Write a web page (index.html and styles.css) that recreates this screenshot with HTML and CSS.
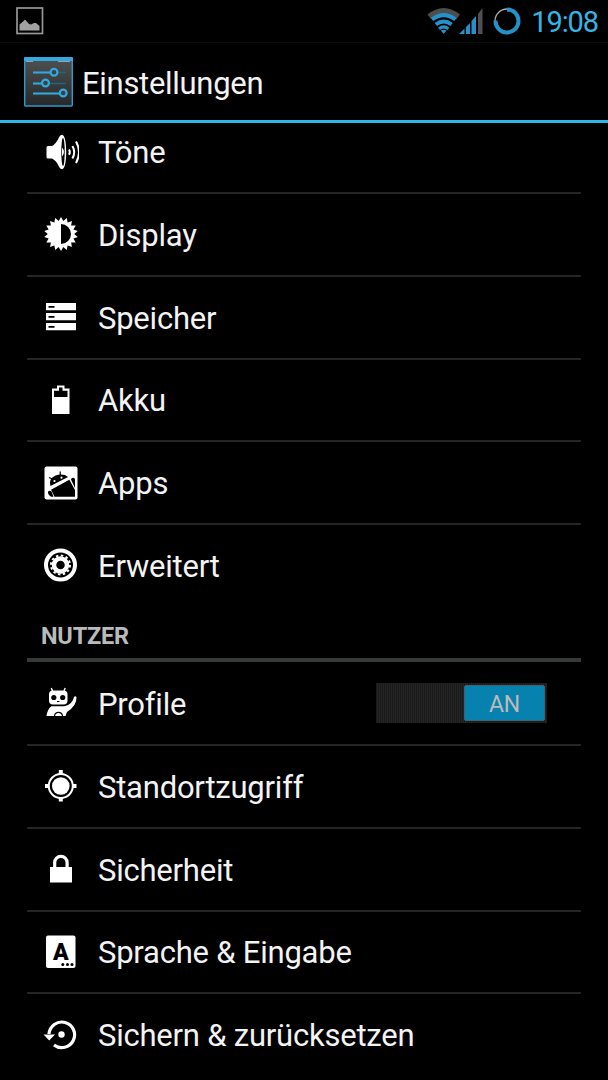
FILE: index.html
```html
<!DOCTYPE html>
<html lang="de">
<head>
  <meta charset="UTF-8">
  <title>Einstellungen</title>
  <link rel="stylesheet" href="styles.css">
</head>
<body>

  <div class="statusbar">
    <svg class="notification" width="28" height="28" viewBox="0 0 28 28">
      <rect x="1" y="1" width="25.5" height="25.5" fill="none" stroke="#969696" stroke-width="1.7"/>
      <path d="M3.500 23.500v-6l3-2.500 2.500-2.500 4 4.500 2 .5 3-1.500h2l3.500 3v4.500z" fill="#a2a2a2"/>
    </svg>
    <div class="status-icons">
      <!-- WLAN -->
      <svg width="34" height="28" viewBox="0 0 34 28">
        <path d="M.5 7.5Q16.700-5.500 33 7.500L29.500 12Q16.700 2 4 12z" fill="#4d4d4d"/>
        <g fill="none" stroke="#2492c8" stroke-width="4">
          <path d="M5 12.5Q16.700 3.800 28.500 12.500"/>
          <path d="M8.800 17.5Q16.700 11.500 24.600 17.500" stroke-width="3.8"/>
          <path d="M12 21.8Q16.700 18 21.400 21.800" stroke-width="3"/>
        </g>
        <path d="M13.800 23.5Q16.700 21.800 19.600 23.500L16.700 27z" fill="#2492c8"/>
      </svg>
      <!-- Signal -->
      <svg class="signal" width="25" height="28" viewBox="0 0 25 28">
        <path d="M0 27L5.500 21.500V27zM7 20L11 16V27H7zM12.500 14L17 9V27H12.500z" fill="#2492c8"/>
        <path d="M19 7L23.500 1V27H19z" fill="#505050"/>
      </svg>
      <!-- Akku-Kreis -->
      <svg class="circle" width="28" height="28" viewBox="0 0 28 28">
        <circle cx="14" cy="14" r="12" fill="none" stroke="#aaa" stroke-width="1.3"/>
        <path d="M14 2.5A11.500 11.500 0 1 1 2.500 13.500" fill="none" stroke="#2492c8" stroke-width="4"/>
      </svg>
      <span class="clock">19:08</span>
    </div>
  </div>

  <div class="header">
    <svg width="50" height="50" viewBox="0 0 50 50">
      <defs>
        <linearGradient id="panel" x1="0" y1="0" x2="0" y2="1">
          <stop offset="0" stop-color="#505252"/>
          <stop offset="1" stop-color="#262829"/>
        </linearGradient>
      </defs>
      <rect x=".7" y="1" width="47.6" height="48" rx="1" fill="url(#panel)" stroke="#3199c8" stroke-width="1.4"/>
      <rect x="0" y="0" width="49" height="4" rx="1" fill="#33a9df"/>
      <path d="M2 4.500h7M34 4.500h12" stroke="#9aa3a7"/>
      <path d="M9 15.500H42M9 26.500H42M9 36.500H42" stroke="#1d6687" stroke-width="1.3"/>
      <path d="M9 15.500H27M9 26.500H18M9 36.500H36" stroke="#31a9df" stroke-width="2"/>
      <g fill="#3b4143" stroke="#31a9df" stroke-width="2.2">
        <circle cx="30" cy="15.2" r="3.4"/>
        <circle cx="21.500" cy="26" r="3.4"/>
        <circle cx="39.200" cy="36" r="3.4"/>
      </g>
    </svg>
    <h1>Einstellungen</h1>
  </div>

  <div class="list">
    <div class="row">
      <svg class="icon" viewBox="0 0 36 36">
        <path d="M3.500 13.500Q3.500 12 5 12H9Q13 10 16.500 2.500Q17.500 .8 19 .8C22 1 23.200 9 23.200 18S22 35 19 35.200Q17.500 35.200 16.500 33.500Q13 26 9 24.500H5Q3.500 24.500 3.500 23z" fill="#fff"/>
        <ellipse cx="20" cy="18" rx="1.7" ry="14"/>
        <path d="M19 13.500Q23 18 19 22.500z" fill="#fff"/>
        <g fill="none" stroke="#fff" stroke-width="2">
          <path d="M26 15.5Q27.700 18 26 20.700"/>
          <path d="M29.400 12Q33 18 29.400 24.500"/>
          <path d="M33 7.500Q39 18 33 29"/>
        </g>
      </svg>
      <span>Töne</span>
    </div>
    <div class="row">
      <svg class="icon" viewBox="0 0 36 36">
        <g fill="#fff">
          <path d="M18 1L32.700 26.500H3.300z"/>
          <path d="M18 1L32.700 26.500H3.300z" transform="rotate(20 18 18)"/>
          <path d="M18 1L32.700 26.500H3.300z" transform="rotate(40 18 18)"/>
          <path d="M18 1L32.700 26.500H3.300z" transform="rotate(60 18 18)"/>
          <path d="M18 1L32.700 26.500H3.300z" transform="rotate(80 18 18)"/>
          <path d="M18 1L32.700 26.500H3.300z" transform="rotate(100 18 18)"/>
        </g>
        <path d="M18 8A10 10 0 0 1 18 28z"/>
      </svg>
      <span>Display</span>
    </div>
    <div class="row">
      <svg class="icon" viewBox="0 0 36 36">
        <path d="M3 4h30v7.300H3zM3 14h30v7.300H3zM3 24h30v7.300H3z" fill="#fff"/>
        <path d="M5.500 7h6v1.800h-6zM5.500 17h6v1.800h-6zM5.500 27h6v1.800h-6z"/>
      </svg>
      <span>Speicher</span>
    </div>
    <div class="row">
      <svg class="icon" viewBox="0 0 36 36">
        <path d="M9 6.500h5V3.500h7.500v3H26.500V32H9z" fill="#fff"/>
        <path d="M11 8.800h5V5.500h3.500v3.300h5V15H11z"/>
      </svg>
      <span>Akku</span>
    </div>
    <div class="row">
      <svg class="icon" viewBox="0 0 36 36">
        <rect x="1.500" y="1.500" width="33" height="33" rx="2" fill="#fff"/>
        <path d="M7.500 21Q5.500 13.500 12.500 10.500Q20.500 8 25 12z"/>
        <path d="M9.500 14L6 12.500M17.200 11V6.500" stroke="#000" stroke-width="1.2"/>
        <path d="M8 24.700L26.300 14.700L32 25V31.800H11.500z"/>
        <path d="M28 14.500Q28.500 12 31 13Q32 13.500 32 15V23z"/>
        <path d="M5 26.500Q7.500 25 8.700 27L10.500 31.800H8Q4.500 29.500 5 26.500z"/>
        <circle cx="11.500" cy="16" r="1.1" fill="#fff"/>
        <circle cx="18.500" cy="12.700" r="1.1" fill="#fff"/>
      </svg>
      <span>Apps</span>
    </div>
    <div class="row last">
      <svg class="icon" viewBox="0 0 36 36">
        <circle cx="17.500" cy="18" r="14.5" fill="none" stroke="#fff" stroke-width="4"/>
        <circle cx="17.500" cy="18" r="6.500" fill="none" stroke="#fff" stroke-width="4.5"/>
        <circle cx="17.500" cy="18" r="9.500" fill="none" stroke="#fff" stroke-width="2" stroke-dasharray="2.500 2.474"/>
      </svg>
      <span>Erweitert</span>
    </div>

    <div class="category">NUTZER</div>

    <div class="row profile">
      <svg class="icon" viewBox="0 0 36 36">
        <path d="M9.500 6L8.300 3M21 6L22.200 3" stroke="#fff" stroke-width="1.4"/>
        <rect x="6" y="5.500" width="18.500" height="14" rx="4" fill="#fff"/>
        <path d="M3.500 31Q4.500 24 8.500 21.300H21.500Q29.500 19.500 31 12Q32 10.500 33.500 12Q34 20.500 24 27L22.500 31z" fill="#fff"/>
        <circle cx="10.800" cy="12.500" r="2.6"/>
        <circle cx="19.700" cy="12.500" r="2.6"/>
        <path d="M14 16.500h2.500" stroke="#000"/>
        <path d="M11.500 31Q12 27.300 15.500 27.300T19.500 31" fill="none" stroke="#000" stroke-width="1.2"/>
      </svg>
      <span>Profile</span>
      <div class="switch"><div class="thumb">AN</div></div>
    </div>
    <div class="row">
      <svg class="icon" viewBox="0 0 36 36">
        <path d="M15.800 2h4v5h-4zM15.800 29h4v4.500h-4zM2 16h5v4H2zM29 16h4.500v4H29z" fill="#fff"/>
        <circle cx="17.800" cy="18" r="12" stroke="#fff" stroke-width="2"/>
        <circle cx="17.800" cy="18" r="8.800" fill="#fff"/>
      </svg>
      <span>Standortzugriff</span>
    </div>
    <div class="row">
      <svg class="icon" viewBox="0 0 36 36">
        <rect x="7" y="16" width="22" height="15.500" fill="#fff"/>
        <path d="M11.700 16.500V11.500A6.200 6.200 0 0 1 24.100 11.500V16.500" fill="none" stroke="#fff" stroke-width="3.2"/>
      </svg>
      <span>Sicherheit</span>
    </div>
    <div class="row">
      <svg class="icon" viewBox="0 0 36 36">
        <rect x="3" y="1.500" width="29.500" height="32.500" rx="2" fill="#fff"/>
        <text class="letter" x="17.800" y="25.500" text-anchor="middle">A</text>
        <circle cx="19.800" cy="30.500" r="1.5"/>
        <circle cx="24.500" cy="30.500" r="1.5"/>
        <circle cx="29" cy="30.500" r="1.5"/>
      </svg>
      <span>Sprache &amp; Eingabe</span>
    </div>
    <div class="row last">
      <svg class="icon" viewBox="0 0 36 36">
        <path d="M6 17A12.800 12.800 0 1 1 11 28" fill="none" stroke="#fff" stroke-width="3.2"/>
        <path d="M.5 17.500H12L6.200 23.500z" fill="#fff"/>
        <circle cx="18.500" cy="17.500" r="3.2" fill="#fff"/>
      </svg>
      <span>Sichern &amp; zurücksetzen</span>
    </div>
  </div>

</body>
</html>
```
FILE: styles.css
```css
* {
  box-sizing: border-box;
}

body {
  margin: 0;
  height: 1080px;
  overflow: hidden;
  background: #000;
  color: #f3f3f3;
  font-family: Roboto, "Liberation Sans", sans-serif;
  font-size: 31px;
  letter-spacing: -0.22px;
}

svg {
  display: block;
  flex: none;
}

.statusbar {
  height: 43px;
  display: flex;
  justify-content: space-between;
  padding: 7px 10px 0 17px;
  border-bottom: 1px solid #0a0a0a;
}

.notification {
  margin-left: -1px;
}

.status-icons {
  display: flex;
}

.signal {
  margin-left: -2px;
}

.circle {
  margin-left: 9px;
}

.clock {
  margin-left: 10px;
  color: #33b5e5;
  font-size: 29px;
  line-height: 30px;
  letter-spacing: -1.1px;
}

.header {
  height: 80px;
  display: flex;
  align-items: center;
  padding-left: 24px;
  border-bottom: 3px solid #33b5e5;
}

.header h1 {
  margin: 3px 0 0 8px;
  font-size: 31px;
  font-weight: normal;
  letter-spacing: -0.3px;
}

.list {
  margin: 0 27px;
  height: 957px;
  overflow: hidden;
}

.row {
  height: 82.75px;
  display: flex;
  align-items: center;
  padding-left: 16px;
  border-bottom: 2px solid #242424;
}

.row:first-child {
  margin-top: -11.75px;
}

.row.last {
  border-bottom-color: transparent;
}

.row.profile {
  height: 84px;
}

.row span {
  margin: 2px 0 0 19px;
}

.icon {
  width: 36px;
  height: 36px;
}

.letter {
  font-family: Roboto, sans-serif;
  font-size: 23px;
  font-weight: 900;
}

.category {
  height: 54.25px;
  padding: 14px 0 0 14px;
  border-bottom: 4px solid #36393a;
  color: #b9bbbb;
  font-size: 23.5px;
  font-weight: bold;
  line-height: 29px;
}

.switch {
  width: 171px;
  height: 40px;
  margin-left: auto;
  margin-right: 34px;
  padding: 2px;
  background: repeating-linear-gradient(90deg, #1a1a1a 0 1px, #242424 1px 2px);
}

.thumb {
  width: 81px;
  height: 36px;
  margin-left: auto;
  background: #0781ae;
  border: 1px solid #3b6575;
  border-radius: 2px;
  color: #bbb;
  font-size: 23px;
  line-height: 37px;
  text-align: center;
}
```
